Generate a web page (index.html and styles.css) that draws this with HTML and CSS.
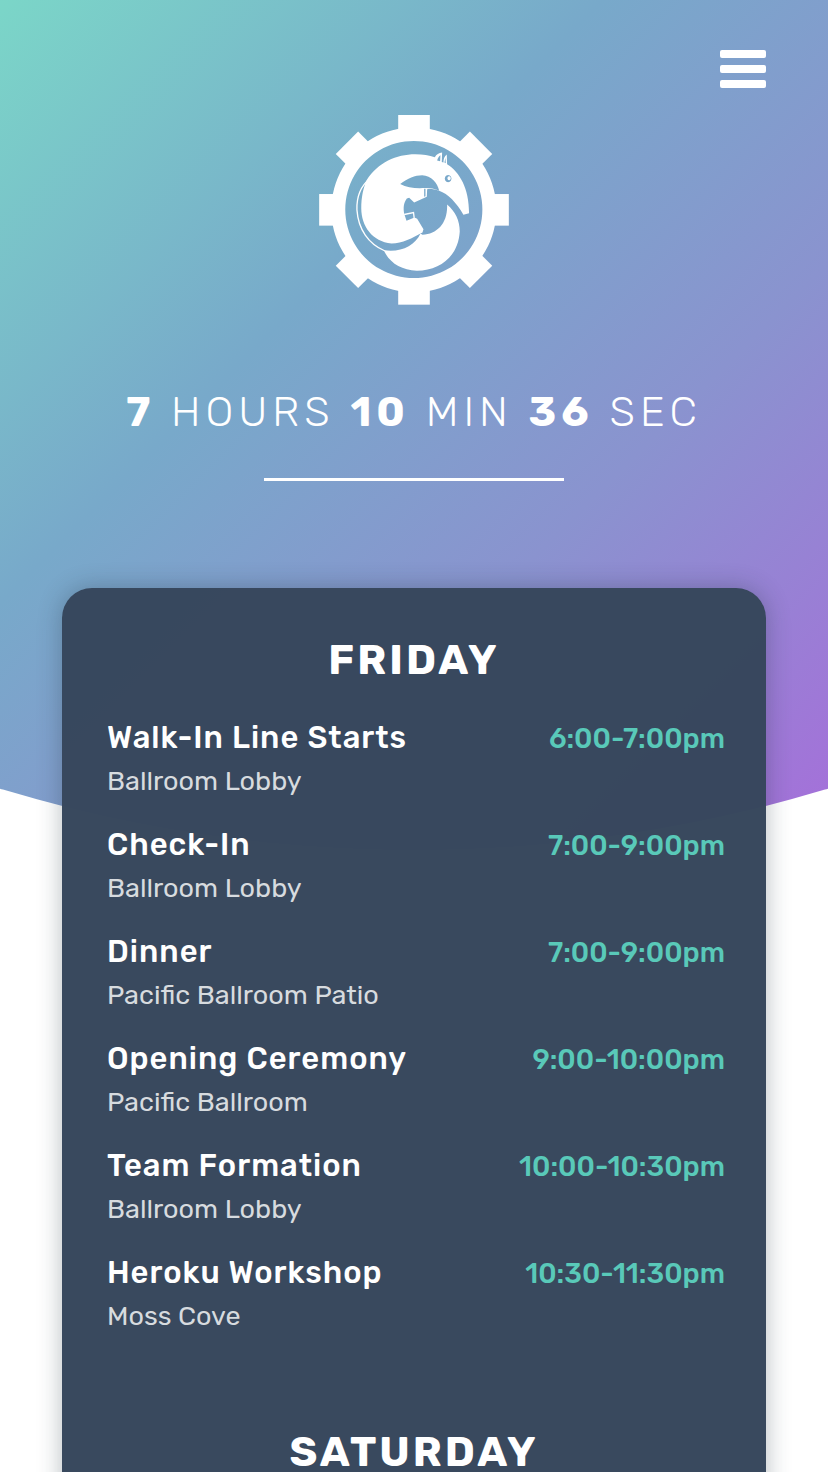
FILE: index.html
```
<!DOCTYPE html>
<html lang="en">
<head>
<meta charset="utf-8">
<meta name="viewport" content="width=device-width, initial-scale=1">
<title>Schedule</title>
<link rel="stylesheet" href="styles.css">
</head>
<body>
<div class="page">
  <div class="backdrop"></div>
  <header class="topbar">
    <button class="menu" type="button" aria-label="Menu">
      <span class="menu-bar"></span><span class="menu-bar"></span><span class="menu-bar"></span>
    </button>
  </header>
  <main class="content">
    <svg class="logo" viewBox="27 30 571 571" role="img" aria-label="Anteater gear logo">
      <defs><path id="tooth" d="M265 90V30H360V90Z"/></defs>
      <g fill="#fff">
        <path fill-rule="evenodd" d="M312 67a248 248 0 1 0 .1 0ZM312 108a206 206 0 1 1-.1 0Z"/>
        <use href="#tooth"/>
        <use href="#tooth" transform="rotate(45 312.500 315)"/>
        <use href="#tooth" transform="rotate(90 312.500 315)"/>
        <use href="#tooth" transform="rotate(135 312.500 315)"/>
        <use href="#tooth" transform="rotate(180 312.500 315)"/>
        <use href="#tooth" transform="rotate(225 312.500 315)"/>
        <use href="#tooth" transform="rotate(270 312.500 315)"/>
        <use href="#tooth" transform="rotate(315 312.500 315)"/>
        <path fill-rule="evenodd" d="M170 226C204 173 260 148 316 148C340 148 358 151 375 157C380 149 387 144 397 143L396 171L401 173C401 163 404 154 411 149L412 178C450 202 478 250 478 325L461 330C440 294 415 267 388 258C375 253 363 252 352 253L351 276L313 293L298 279L291 281C281 295 280 308 283 327L290 348L314 338L322 342L341 373L338 383C307 400 278 416 245 416C187 410 154 364 154 310C154 277 160 250 170 226Z
          M271 237C294 220 315 211 337 211C365 213 383 233 388 257C370 249 350 248 330 250C308 249 288 246 271 237Z
          M343 252V276L347 274V252Z
          M415 210a10 11 0 1 0 .1 0ZM418 214a5 6 0 1 1-.1 0Z
          M382 167C384 159 388 153 392 151L391 169Z
          M404 173L407 159L408 175Z"/>
        <path d="M283 329L311 323L313 339" fill="none" stroke="#fff" stroke-width="4"/>
        <path d="M412 299C437 320 450 348 450 380C446 453 392 498 321 498C273 496 239 474 221 436C270 444 314 425 332 386L338 390C382 387 414 356 412 299Z"/>
        <path d="M180 221C146 249 140 286 141 315C145 374 176 417 224 438" fill="none" stroke="#fff" stroke-width="4"/>
      </g>
    </svg>
    <p class="countdown"><strong>7</strong> hours <strong>10</strong> min <strong>36</strong> sec</p>
    <hr class="divider">
    <div class="card">
      <section class="day">
        <h2 class="day-name">Friday</h2>
        <ul class="events">
          <li class="event"><h3 class="event-name">Walk-In Line Starts</h3><time class="event-time">6:00-7:00pm</time><p class="event-place">Ballroom Lobby</p></li>
          <li class="event"><h3 class="event-name">Check-In</h3><time class="event-time">7:00-9:00pm</time><p class="event-place">Ballroom Lobby</p></li>
          <li class="event"><h3 class="event-name">Dinner</h3><time class="event-time">7:00-9:00pm</time><p class="event-place">Pacific Ballroom Patio</p></li>
          <li class="event"><h3 class="event-name">Opening Ceremony</h3><time class="event-time">9:00-10:00pm</time><p class="event-place">Pacific Ballroom</p></li>
          <li class="event"><h3 class="event-name">Team Formation</h3><time class="event-time">10:00-10:30pm</time><p class="event-place">Ballroom Lobby</p></li>
          <li class="event"><h3 class="event-name">Heroku Workshop</h3><time class="event-time">10:30-11:30pm</time><p class="event-place">Moss Cove</p></li>
        </ul>
      </section>
      <section class="day">
        <h2 class="day-name">Saturday</h2>
      </section>
    </div>
  </main>
</div>
</body>
</html>
```
FILE: styles.css
```
* { box-sizing: border-box; margin: 0; padding: 0; }
body {
  background: #fff;
  color: #fff;
  font-family: Rubik, Inter, Roboto, "Liberation Sans", sans-serif;
}
.page {
  position: relative;
  height: 100vh;
  overflow: hidden;
}
.backdrop {
  position: absolute;
  inset: 0 0 auto;
  z-index: -1;
  height: 850px;
  background: linear-gradient(135deg, #7bd6c8 0%, #78a9ca 36%, #8a93cf 65%, #a66eda 100%);
  clip-path: ellipse(171% 165% at 50% -65%);
}
.topbar {
  display: flex;
  justify-content: flex-end;
  padding: 50px 62px 0;
}
.menu {
  display: flex;
  flex-direction: column;
  gap: 7px;
  width: 46px;
  border: 0;
  background: none;
  cursor: pointer;
}
.menu-bar {
  width: 100%;
  height: 8px;
  border-radius: 2px;
  background: #fff;
}
.content {
  display: flex;
  flex-direction: column;
  align-items: center;
  padding: 27px 62px 0;
}
.logo { width: 190px; height: 190px; }
.countdown {
  margin-top: 82px;
  font-size: 42px;
  font-weight: 350;
  line-height: 50px;
  letter-spacing: 5px;
  text-transform: uppercase;
  white-space: nowrap;
}
.countdown strong { font-weight: 700; }
.divider {
  width: 300px;
  height: 3px;
  margin-top: 41px;
  border: 0;
  background: #fff;
}
.card {
  display: flex;
  flex-direction: column;
  gap: 95px;
  width: 100%;
  margin-top: 107px;
  padding: 52px 0;
  border-radius: 30px;
  background: rgba(55, 71, 92, 0.99);
  box-shadow: 0 0 24px rgba(30, 50, 60, 0.32);
}
.day-name {
  font-size: 42px;
  font-weight: 700;
  line-height: 40px;
  letter-spacing: 3px;
  text-align: center;
  text-transform: uppercase;
}
.events {
  display: flex;
  flex-direction: column;
  gap: 21px;
  margin-top: 36px;
  padding: 0 41px 0 45px;
  list-style: none;
}
.event {
  display: grid;
  grid-template-columns: 1fr auto;
  align-items: baseline;
}
.event-name {
  font-size: 31px;
  font-weight: 500;
  line-height: 44px;
  letter-spacing: 1px;
}
.event-time {
  color: #59c9b9;
  font-size: 28px;
  font-weight: 500;
  line-height: 40px;
}
.event-place {
  color: #d7dbdf;
  font-size: 27px;
  font-weight: 400;
  line-height: 42px;
}
```
